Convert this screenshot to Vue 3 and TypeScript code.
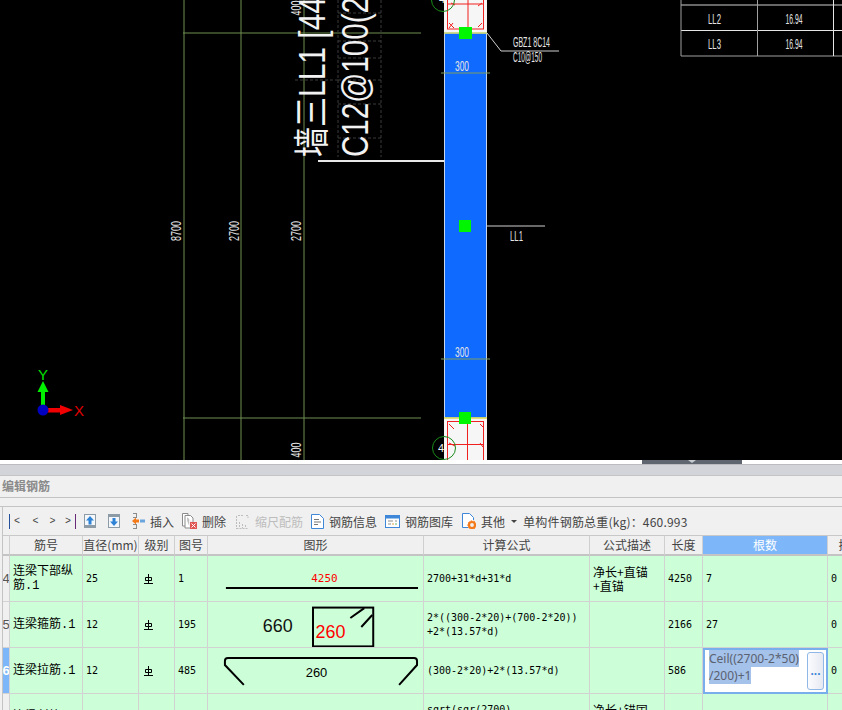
<template>
  <div class="app">
    <!-- CAD drawing area: a free canvas, so everything sits on drawing coordinates -->
    <svg class="canvas" viewBox="0 0 842 460" width="842" height="460">
      <rect x="0" y="0" width="842" height="460" fill="#000" />

      <!-- dimension lines -->
      <line v-for="x in [184, 241, 304]" :key="x" :x1="x" y1="0" :x2="x" y2="460" class="dim" />
      <line x1="183" y1="33" x2="421" y2="33" class="dim" />
      <line x1="183" y1="418" x2="421" y2="418" class="dim" />

      <text v-for="t in dimTexts" :key="t.key" class="cad" :transform="`translate(${t.x} ${t.y}) rotate(-90)`" text-anchor="middle" :textLength="t.w" lengthAdjust="spacingAndGlyphs">{{ t.text }}</text>

      <!-- dashed text boxes round the big labels -->
      <g class="dash">
        <line x1="338" y1="0" x2="338" y2="157" />
        <line x1="381" y1="0" x2="381" y2="157" />
        <line v-for="y in [13, 41, 58, 80, 104, 138]" :key="y" x1="338" :y1="y" x2="381" :y2="y" />
        <line x1="295" y1="80" x2="338" y2="80" />
      </g>

      <!-- big wall label -->
      <text class="big" transform="translate(325 157) rotate(-90)" textLength="160" lengthAdjust="spacingAndGlyphs">墙三LL1 [44</text>
      <text class="big big-b" transform="translate(368 157) rotate(-90)" textLength="160" lengthAdjust="spacingAndGlyphs">C12@100(2</text>
      <line x1="318" y1="161" x2="444" y2="161" stroke="#e8e8e8" stroke-width="2" />

      <!-- concealed column blocks -->
      <rect x="444" y="0" width="43" height="33" fill="#f6f6f6" />
      <rect x="444" y="418" width="43" height="42" fill="#f6f6f6" />
      <g class="rebar">
        <rect x="447.5" y="-8" width="36" height="37" />
        <line x1="468" y1="0" x2="468" y2="29" />
        <line x1="447" y1="4" x2="484" y2="4" />
        <path d="M449 23l5 5M449 28l4-5M482 23l-4 4M478 6l4-3M451 3l4 2" />
        <rect x="447.5" y="421.5" width="36" height="45" />
        <line x1="467.5" y1="421" x2="467.5" y2="460" />
        <line x1="447" y1="444.5" x2="484" y2="444.5" />
        <path d="M449 424l5 5M449 443l6 3M480 443l3 4M480 424l3 3" />
      </g>
      <text x="442" y="3" class="axis-no" text-anchor="middle">4</text>
      <text x="441" y="452" class="axis-no" text-anchor="middle">4</text>
      <circle cx="443" cy="0" r="11.5" class="axis-ring" />
      <circle cx="444" cy="448" r="11.5" class="axis-ring" />

      <!-- beam LL1 -->
      <rect x="444.5" y="33" width="42" height="385" fill="#0f6aff" stroke="#c6d6ee" />
      <line x1="444" y1="33" x2="487" y2="33" stroke="#c9d66a" stroke-width="1.5" />
      <line x1="444" y1="418" x2="487" y2="418" stroke="#e6e04c" stroke-width="1.5" />
      <g v-for="d in spanDims" :key="d.y">
        <line x1="441" :y1="d.y" x2="490" :y2="d.y" stroke="#7f9e5e" />
        <text x="462" :y="d.y - 2" class="cad cad-tall" text-anchor="middle" textLength="14" lengthAdjust="spacingAndGlyphs">300</text>
      </g>
      <rect x="459" y="27" width="13" height="12" fill="#00f500" />
      <rect x="459" y="220" width="12" height="12" fill="#00f500" />
      <rect x="459" y="412" width="12" height="12" fill="#00f500" />

      <!-- leaders -->
      <path d="M487 33L501 51H559" fill="none" stroke="#d0d0d0" />
      <text x="513" y="47" class="cad" textLength="37" lengthAdjust="spacingAndGlyphs">GBZ1 8C14</text>
      <text x="513" y="62" class="cad" textLength="29" lengthAdjust="spacingAndGlyphs">C10@150</text>
      <line x1="487" y1="226" x2="545" y2="226" stroke="#d0d0d0" />
      <text x="510" y="241" class="cad" textLength="13" lengthAdjust="spacingAndGlyphs">LL1</text>

      <!-- schedule table, top right -->
      <g>
        <line x1="681" y1="5" x2="842" y2="5" stroke="#8a8a8a" stroke-width="1.5" />
        <line x1="681" y1="30.5" x2="842" y2="30.5" stroke="#e6e6e6" />
        <line x1="681" y1="56" x2="842" y2="56" stroke="#a0a0a0" />
        <line x1="681" y1="0" x2="681" y2="56" stroke="#a0a0a0" />
        <line x1="757.5" y1="0" x2="757.5" y2="56" stroke="#a0a0a0" />
        <line x1="833.5" y1="0" x2="833.5" y2="56" stroke="#e6e6e6" />
        <text x="714.5" y="24" class="cad" text-anchor="middle" textLength="13" lengthAdjust="spacingAndGlyphs">LL2</text>
        <text x="714.5" y="49" class="cad" text-anchor="middle" textLength="13" lengthAdjust="spacingAndGlyphs">LL3</text>
        <text x="794" y="24" class="cad" text-anchor="middle" textLength="17" lengthAdjust="spacingAndGlyphs">16.94</text>
        <text x="794" y="49" class="cad" text-anchor="middle" textLength="17" lengthAdjust="spacingAndGlyphs">16.94</text>
      </g>

      <!-- UCS icon -->
      <rect x="41" y="390" width="4" height="16" fill="#00f000" />
      <polygon points="43,381 37.5,392 48.5,392" fill="#00f000" />
      <rect x="46" y="408" width="16" height="4.5" fill="#f00000" />
      <polygon points="73,410 60,405 60,415" fill="#f00000" />
      <circle cx="43" cy="410" r="5.5" fill="#0000c0" />
      <text x="43" y="380" class="ucs" fill="#00e000" text-anchor="middle">Y</text>
      <text x="79" y="416" class="ucs" fill="#e00000" text-anchor="middle">X</text>
    </svg>

    <div class="splitter">
      <div class="handle"><span class="handle-tri"></span></div>
    </div>

    <div class="panel-bar"></div>
    <div class="panel-title">编辑钢筋</div>
    <div class="panel-gap"></div>

    <div class="body">
      <div class="toolbar">
        <div class="nav">
          <span class="nav-btn nav-first">&lt;</span>
          <span class="nav-btn">&lt;</span>
          <span class="nav-btn">&gt;</span>
          <span class="nav-btn nav-last">&gt;</span>
        </div>
        <svg class="ico move-up" width="12" height="14" viewBox="0 0 12 14">
          <rect x="0" y="0" width="12" height="14" fill="#8d9ba6" />
          <rect x="1" y="1" width="10" height="10" fill="#f4f8fc" />
          <path d="M6 2L10 6.5H7.5V10.5H4.5V6.5H2Z" fill="#2f83d6" />
        </svg>
        <svg class="ico move-down" width="12" height="14" viewBox="0 0 12 14">
          <rect x="0" y="0" width="12" height="14" fill="#8d9ba6" />
          <rect x="1" y="3" width="10" height="10" fill="#f4f8fc" />
          <path d="M6 12L10 7.5H7.5V4H4.5V7.5H2Z" fill="#2f83d6" />
        </svg>
        <span class="tool tool-insert">
          <svg width="13" height="16" viewBox="0 0 13 16">
            <path d="M1 .5H5M1 15.5H5M1 4.5H5M1 11.5H5M4.5 .5V4.5M4.5 11.5V15.5" fill="none" stroke="#8b8b8b" />
            <path d="M0 8L4 4.5V6.5H7V9.5H4V11.5Z" fill="#f47a1a" />
            <rect x="8" y="6.5" width="5" height="3" fill="#6aa6dd" />
          </svg>
          插入
        </span>
        <span class="tool tool-del">
          <svg width="15" height="16" viewBox="0 0 15 16">
            <path d="M.5 .5H6V13H.5Z" fill="#fff" stroke="#8b8b8b" />
            <path d="M3 2.5H8.5L11 5V9M3 2.5V15H8" fill="#fff" stroke="#8b8b8b" />
            <rect x="8" y="9" width="7" height="7" fill="#e25555" />
            <path d="M9.5 10.5l4 4M13.5 10.5l-4 4" stroke="#fff" />
          </svg>
          删除
        </span>
        <span class="tool tool-scale disabled">
          <svg width="13" height="15" viewBox="0 0 13 15">
            <path d="M.5 2V15M.5 14.5H12M3.5 8V14M6.5 10V14M9.5 11V14M2 1.5H8M10 1.5H12V4" fill="none" stroke="#bdbdbd" stroke-dasharray="2 1" />
          </svg>
          缩尺配筋
        </span>
        <span class="tool tool-info">
          <svg width="13" height="15" viewBox="0 0 13 15">
            <path d="M.5 .5H8.5L12.5 4.5V14.5H.5Z" fill="#fff" stroke="#3f87d8" />
            <path d="M3 5.5H8M3 8H10M3 10.5H7" stroke="#777" />
          </svg>
          钢筋信息
        </span>
        <span class="tool tool-lib">
          <svg width="15" height="13" viewBox="0 0 15 13">
            <rect x=".5" y=".5" width="14" height="12" fill="#fff" stroke="#3f87d8" />
            <rect x="1" y="1" width="13" height="2.5" fill="#3f87d8" />
            <path d="M3 6H8M10 6H12M3 9H6" stroke="#8b8b8b" />
            <path d="M7 9H9" stroke="#d9a441" />
            <path d="M10 9H12" stroke="#66b36a" />
          </svg>
          钢筋图库
        </span>
        <span class="tool tool-other">
          <svg width="14" height="16" viewBox="0 0 14 16">
            <path d="M6 14.5H.5V.5H7.5L11.5 4.5V7" fill="#fff" stroke="#3f87d8" />
            <circle cx="10" cy="12" r="3" fill="none" stroke="#f47a1a" stroke-width="2.2" />
            <circle cx="10" cy="12" r="4.2" fill="none" stroke="#f47a1a" stroke-width="1" stroke-dasharray="1.5 1.5" />
          </svg>
          其他
        </span>
        <span class="caret"></span>
        <span class="total">单构件钢筋总重(kg)：460.993</span>
      </div>

      <div class="grid">
        <div class="head row-head"></div>
        <div v-for="col in columns" :key="col" class="head" :class="{ 'head-active': col === '根数' }">{{ col }}</div>

        <template v-for="row in rows" :key="row.no">
          <div class="cell row-head" :class="{ 'row-current': row.current }">{{ row.no }}</div>
          <div class="cell name" :class="{ 'name-last': row.no === 7 }">{{ row.name }}</div>
          <div class="cell num">{{ row.dia }}</div>
          <div class="cell grade">
            <svg v-if="row.dia" width="9" height="10" viewBox="0 0 9 10">
              <path d="M1.5 3.5H7.500V6.500H1.500ZM4.500 0V9M0 9.500H9" fill="none" stroke="#000" />
            </svg>
          </div>
          <div class="cell num">{{ row.fig }}</div>
          <div class="cell shape">
            <svg v-if="row.no === 4" width="216" height="46" viewBox="1 0 216 46">
              <text x="118" y="26" class="shape-sm" fill="#f00" text-anchor="middle">4250</text>
              <line x1="19" y1="32" x2="212" y2="32" stroke="#000" stroke-width="2" />
            </svg>
            <svg v-else-if="row.no === 5" width="216" height="46" viewBox="1 0 216 46">
              <text x="56" y="30" class="shape-lg" fill="#111">660</text>
              <rect x="106.500" y="5.500" width="60.500" height="39" fill="none" stroke="#000" stroke-width="2" />
              <path d="M144 16L158 6M155 25L166 13" stroke="#000" stroke-width="2" fill="none" />
              <text x="109" y="36" class="shape-lg" fill="#f00">260</text>
            </svg>
            <svg v-else-if="row.no === 6" width="216" height="46" viewBox="1 0 216 46">
              <path d="M37 37L18 17V13Q18 10 21 10H208Q211 10 211 13V17L193 37" fill="none" stroke="#000" stroke-width="2" />
              <text x="110" y="29" class="shape-md" fill="#000" text-anchor="middle">260</text>
            </svg>
          </div>
          <div class="cell num formula">{{ row.formula }}</div>
          <div class="cell desc">{{ row.desc }}</div>
          <div class="cell num">{{ row.len }}</div>
          <div class="cell num count" :class="{ 'count-edit': row.editing }">
            <template v-if="row.editing">
              <div class="edit-text"><span class="edit-sel">{{ row.count }}</span></div>
              <button class="edit-btn" type="button">...</button>
            </template>
            <template v-else>{{ row.count }}</template>
          </div>
          <div class="cell num">{{ row.lap }}</div>
        </template>
      </div>
    </div>
  </div>
</template>

<script setup lang="ts">
interface RebarRow {
  no: number;
  name: string;
  dia: string;
  fig: string;
  formula: string;
  desc: string;
  len: string;
  count: string;
  lap: string;
  current?: boolean;
  editing?: boolean;
}

const columns = ['筋号', '直径(mm)', '级别', '图号', '图形', '计算公式', '公式描述', '长度', '根数', '搭接'];

const rows: RebarRow[] = [
  { no: 4, name: '连梁下部纵筋.1', dia: '25', fig: '1', formula: '2700+31*d+31*d', desc: '净长+直锚\n+直锚', len: '4250', count: '7', lap: '0' },
  { no: 5, name: '连梁箍筋.1', dia: '12', fig: '195', formula: '2*((300-2*20)+(700-2*20))\n+2*(13.57*d)', desc: '', len: '2166', count: '27', lap: '0' },
  { no: 6, name: '连梁拉筋.1', dia: '12', fig: '485', formula: ' (300-2*20)+2*(13.57*d)', desc: '', len: '586', count: 'Ceil((2700-2*50)\n/200)+1', lap: '0', current: true, editing: true },
  { no: 7, name: '连梁斜筋.1', dia: '', fig: '', formula: 'sqrt(sqr(2700)\n+sqr(700))', desc: '净长+锚固\n+锚固', len: '', count: '', lap: '' },
];

const dimTexts = [
  { key: 'total', text: '8700', x: 181, y: 231, w: 20 },
  { key: 'a', text: '2700', x: 239, y: 231, w: 20 },
  { key: 'b', text: '2700', x: 301, y: 231, w: 20 },
  { key: 'top', text: '400', x: 301, y: 8, w: 15 },
  { key: 'bottom', text: '400', x: 301, y: 450, w: 15 },
];

const spanDims = [{ y: 73 }, { y: 359 }];
</script>

<style scoped>
.app {
  width: 842px;
  height: 710px;
  overflow: hidden;
  background: #f0f0f0;
  font-family: "Noto Sans CJK SC", "Noto Sans", sans-serif;
  font-size: 12px;
  color: #444;
}

.canvas {
  display: block;
}

.dim {
  stroke: #6f8f50;
  stroke-width: 1;
}

.cad {
  fill: #e4e4e4;
  font-family: "Liberation Sans", sans-serif;
  font-size: 14px;
}

.cad-tall {
  font-size: 15px;
}

.dash line {
  stroke: #3a3a3a;
  stroke-dasharray: 3 2;
}

.big {
  fill: #f2f2f2;
  font-family: "Liberation Sans", "Noto Sans CJK SC", sans-serif;
  font-size: 36px;
}

.big-b {
  font-size: 36px;
}

.rebar rect,
.rebar line,
.rebar path {
  fill: none;
  stroke: #f02020;
  stroke-width: 1;
}

.axis-ring {
  fill: none;
  stroke: #1a8a1a;
}

.axis-no {
  fill: #f4f4f4;
  font-family: "Liberation Sans", sans-serif;
  font-size: 11px;
}

.ucs {
  font-family: "Liberation Sans", sans-serif;
  font-size: 15px;
}

.splitter {
  height: 4px;
  background: #fff;
  padding-left: 642px;
}

.handle {
  width: 100px;
  height: 4px;
  background: #5f6670;
  display: flex;
  justify-content: center;
}

.handle-tri {
  width: 0;
  height: 0;
  border-left: 4px solid transparent;
  border-right: 4px solid transparent;
  border-top: 3px solid #c8ccd0;
}

.panel-bar {
  height: 11px;
  box-sizing: border-box;
  background: #d3d4d9;
  border-top: 1px solid #bcbcc0;
}

.panel-title {
  height: 23px;
  box-sizing: border-box;
  padding-left: 2px;
  border-top: 1px solid #c4c4c4;
  border-bottom: 1px solid #c4c4c4;
  line-height: 20px;
  font-weight: 700;
  color: #8a8a8a;
}

.panel-gap {
  height: 9px;
  box-sizing: border-box;
  border-bottom: 1px solid #c4c4c4;
}

.body {
  margin-left: 2px;
  border-left: 1px solid #c4c4c4;
}

.toolbar {
  height: 28px;
  display: flex;
  align-items: center;
  box-sizing: border-box;
  white-space: nowrap;
}

.nav {
  display: flex;
  width: 72px;
  margin-left: 6px;
  margin-right: 3px;
}

.nav-btn {
  width: 17px;
  font-family: "Liberation Mono", monospace;
  font-size: 10px;
  line-height: 15px;
  text-align: center;
}

.nav-first {
  width: 14px;
  margin-right: 3px;
  border-left: 1px solid #24509a;
}

.nav-last {
  width: 14px;
  border-right: 1px solid #6a2a7a;
}

.ico {
  flex: none;
}

.move-up {
  margin-right: 12px;
}

.move-down {
  margin-right: 12px;
}

.tool {
  display: flex;
  align-items: center;
  gap: 5px;
  margin-right: 8px;
}

.tool svg {
  flex: none;
}

.tool-scale {
  margin-left: 2px;
  gap: 6px;
}

.disabled {
  color: #bdbdbd;
}

.tool-other {
  margin-left: 1px;
  gap: 5px;
  margin-right: 6px;
}

.caret {
  width: 0;
  height: 0;
  border-left: 3px solid transparent;
  border-right: 3px solid transparent;
  border-top: 3px solid #444;
  margin-right: 6px;
}

.total {
  color: #444;
  letter-spacing: 0.2px;
}

.grid {
  display: grid;
  grid-template-columns: 7px 73px 56px 36px 33px 216px 166px 75px 38px 125px 46px;
  grid-template-rows: 21px repeat(4, 46px);
}

.head {
  box-sizing: border-box;
  border-top: 1px solid #c8c8c8;
  border-right: 1px solid #cfcfcf;
  border-bottom: 2px solid #c4c4c4;
  background: #f0f0f0;
  text-align: center;
  line-height: 18px;
  white-space: nowrap;
  overflow: hidden;
}

.head-active {
  background: #7db7f9;
  color: #fff;
}

.cell {
  box-sizing: border-box;
  display: flex;
  align-items: center;
  border-right: 1px solid #d2d2d2;
  border-bottom: 1px solid #d2d2d2;
  background: #ccffd8;
  color: #000;
  white-space: pre-line;
  overflow: hidden;
}

.row-head {
  background: #f0f0f0;
  justify-content: center;
  color: #555;
  font-family: "Liberation Sans", sans-serif;
  font-size: 13px;
}

.row-current {
  background: #7db7f9;
  color: #fff;
  font-weight: 700;
}

.name {
  padding-left: 3px;
  font-family: "Liberation Mono", "Noto Sans CJK SC", monospace;
  font-size: 12px;
  line-height: 14px;
}

.name-last {
  padding-bottom: 0;
}

.num {
  padding-left: 3px;
  font-family: "DejaVu Sans Mono", monospace;
  font-size: 10px;
  line-height: 14px;
}

.grade {
  padding-left: 5px;
}

.shape {
  padding: 0;
}

.shape-sm {
  font-family: "DejaVu Sans Mono", monospace;
  font-size: 11px;
}

.shape-md {
  font-family: "Liberation Sans", sans-serif;
  font-size: 13px;
}

.shape-lg {
  font-family: "Liberation Sans", sans-serif;
  font-size: 18px;
}

.desc {
  padding-left: 3px;
  font-size: 12px;
  line-height: 14px;
}

.count-edit {
  position: relative;
  align-items: flex-start;
  padding: 0 2px 2px 4px;
  border: 2px solid #78aeec;
  background: #fff;
  gap: 4px;
}

.edit-text {
  width: 94px;
  flex: none;
  font-family: "Noto Sans", sans-serif;
  font-size: 12px;
  line-height: 17px;
  white-space: pre-line;
  color: #5a6170;
}

.edit-sel {
  background: #a4c2ea;
}

.edit-btn {
  width: 17px;
  height: 38px;
  margin-top: 2px;
  flex: none;
  padding: 0;
  border: 1px solid #8fb8e6;
  border-radius: 3px;
  background: linear-gradient(90deg, #fbfcfe, #e6e9f2);
  color: #3f87d8;
  font-family: "Liberation Sans", sans-serif;
  font-size: 12px;
  font-weight: 700;
}
</style>
